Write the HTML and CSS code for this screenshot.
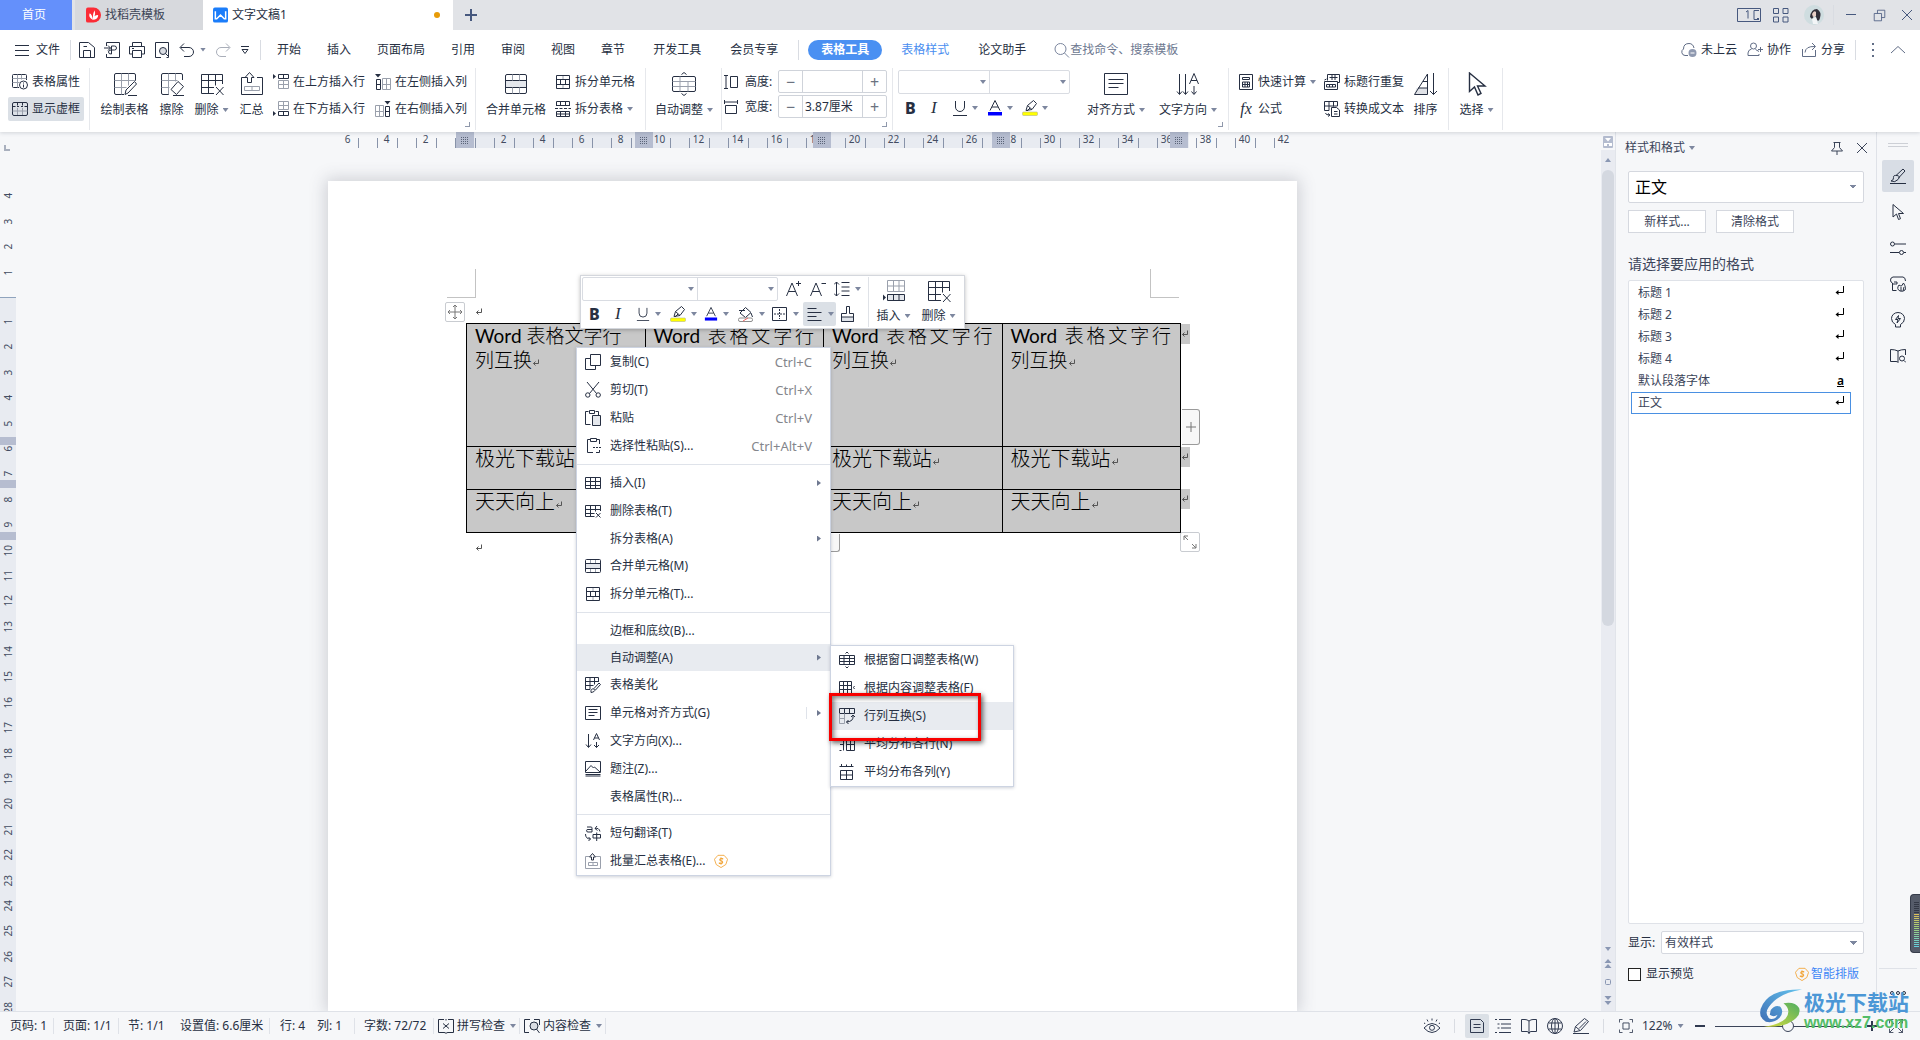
FILE: index.html
```html
<!DOCTYPE html>
<html lang="zh-CN">
<head>
<meta charset="utf-8">
<title>文字文稿1</title>
<link rel="stylesheet" href="styles.css">
</head>
<body>
<svg class="defs" aria-hidden="true">
  <symbol id="grid" viewBox="0 0 16 16"><path d="M.5 2.500h15v11H.5zM.5 6.500h15M.5 10.500h15M5.500 2.500v11M10.500 2.500v11"/></symbol>
  <symbol id="tbl-x" viewBox="0 0 16 16"><path d="M15.500 8V2.500H.5v11h9M.5 6.500h15M.5 10.500h9M5.500 2.500v11M10.500 2.500v6M11 10l4.500 4.500M15.500 10 11 14.500"/></symbol>
  <symbol id="merge" viewBox="0 0 16 16"><path d="M.5 5.500h15v5H.5z" fill="#e4e7ec"/><path d="M1.500 1.500h13a1 1 0 0 1 1 1v11a1 1 0 0 1-1 1h-13a1 1 0 0 1-1-1v-11a1 1 0 0 1 1-1"/><path class="soft" d="M5.500 2v3M10.500 2v3M5.500 11v3M10.500 11v3"/></symbol>
  <symbol id="split" viewBox="0 0 16 16"><path d="M1.500 1.500h13v13h-13zM1.500 5.500h13M1.500 10.500h13M5.500 5.500v5M10.500 5.500v5"/><path class="soft" d="M8 2v3M8 11v3"/></symbol>
  <symbol id="split-t" viewBox="0 0 16 16"><path d="M1.500 4.500V.5h13v4M5.500.5v4M10.500.5v4M1 4.500h14M0 7.500h3M4.500 7.500h3M9 7.500h3M13.500 7.500H16M1.500 10.500h13v5h-13zM1.500 13h13M5.500 10.500v5M10.500 10.500v5"/></symbol>
  <symbol id="props" viewBox="0 0 16 16"><path d="M7 13.500H1.500a1 1 0 0 1-1-1v-11a1 1 0 0 1 1-1h12a1 1 0 0 1 1 1V6"/><path class="soft" d="M.5 4.500h14M.5 8.500h7M5.500.5v13M9.500.5v5"/><circle cx="11.500" cy="11" r="4"/><path d="M11.500 10.500v3M11.500 8.500v1"/></symbol>
  <symbol id="dashed" viewBox="0 0 16 16"><rect x=".5" y="1.500" width="15" height="13" rx="1.500"/><path d="M.5 5.500h3M5 5.500h2M9 5.500h2M12.500 5.500h3M5.500 1.500v3M10.500 1.500v3"/><path class="soft" d="M.5 10h15M5.500 7v7M10.500 7v7"/></symbol>
  <symbol id="ins-up" viewBox="0 0 16 16"><path d="M5.500.5h10v4h-10zM10.500.5v4" /><path class="soft" d="M5.500 6.500h10v8h-10zM5.500 10.500h10M10.500 6.500v8"/><path d="M0 0v5l3-2.500z" fill="currentColor" stroke="none"/></symbol>
  <symbol id="ins-down" viewBox="0 0 16 16"><path class="soft" d="M5.500.5h10v8h-10zM5.500 4.500h10M10.500.5v8"/><path d="M5.500 10.500h10v4h-10zM10.500 10.500v4"/><path d="M0 10v5l3-2.500z" fill="currentColor" stroke="none"/></symbol>
  <symbol id="ins-left" viewBox="0 0 16 16"><path d="M1.500 5.500h4v10h-4zM1.500 10.500h4"/><path class="soft" d="M7.500 4.500h8v11h-8zM7.500 10.500h8M11.500 4.500v11"/><path d="M0 0h6L3 3.500z" fill="currentColor" stroke="none"/></symbol>
  <symbol id="ins-right" viewBox="0 0 16 16"><path class="soft" d="M.5 4.500h8v11h-8zM.5 10.500h8M4.500 4.500v11"/><path d="M10.500 5.500h4v10h-4zM10.500 10.500h4"/><path d="M9.500 0h6l-3 3.500z" fill="currentColor" stroke="none"/></symbol>
  <symbol id="paras" viewBox="0 0 16 16"><path d="M.5 1.500h15v13H.5zM3.500 4.500h9M3.500 7.500h9M3.500 10.500h6"/></symbol>
  <symbol id="copy" viewBox="0 0 16 16"><path d="M5.500.5h10v11h-10zM5.500 4.500h-5v11h10v-4"/></symbol>
  <symbol id="cut" viewBox="0 0 16 16"><path d="M2 0l9.500 11.500M14 0 4.500 11.500"/><circle cx="2.800" cy="13" r="2.200"/><circle cx="13.200" cy="13" r="2.200"/></symbol>
  <symbol id="paste" viewBox="0 0 16 16"><path d="M5.500 14.500h-5v-13h3M10.500 1.500h3V5M4.500.5h5v3h-5z"/><path d="M7.500 5.500h8v10h-8z" fill="#e4e7ec"/></symbol>
  <symbol id="paste-s" viewBox="0 0 16 16"><path d="M8 14.500H2.500v-13h3M11.500 1.500h3V6M5.500.5h6v3h-6zM14.500 12v2.500H11M8 9.500h2M11 9.500h2M14 9.500h2"/></symbol>
  <symbol id="beauty" viewBox="0 0 16 16"><path d="M5 12.500H.5v-12h13V5M.5 4.500h13M.5 8.500h8M5 .5v12M9.500.5v7M6 15.500c-.5-3 1-4 3-3.500s1 3-3 3.500M9 11.500l5-5.500 1.500 1.500-5 5.500"/></symbol>
  <symbol id="dir" viewBox="0 0 16 16"><path d="M3.500 1v13M1 11.500l2.500 3 2.500-3M8.500 7l3-6.500 3 6.500M9.500 5h4M11.500 9v5.500M9 12l2.500 2.500L14 12"/></symbol>
  <symbol id="caption" viewBox="0 0 16 16"><path d="M.5.5h15v11H.5zM.5 15h15M1 10l5-5.500 2.500 2.500 1-1 5.500 5M.5 13.500h15"/></symbol>
  <symbol id="trans" viewBox="0 0 16 16"><path d="M2 2h4q1 0 1 1v4H3Q1.500 7 1.500 5.700T3 4.500h4M8 13h7.500v-3.500H8zM11.700 7.500v8.500M10 3.500q4-1 5 3M12 1l-2 2.500 2.500 2M.5 9q0 5 5 5M3.500 12l2 2-2 2"/></symbol>
  <symbol id="batch" viewBox="0 0 16 16"><path class="soft" d="M4 3.500H.5v12h15v-12H11M3.500 9.500h9v3h-9zM8 9.500v3"/><path d="M6.500 7V4h-2l3-3.500 3 3.500h-2v3z"/></symbol>
  <symbol id="fit-w" viewBox="0 0 16 16"><path d="M.5 3.500h15v9H.5zM.5 6.500h15M.5 9.500h15M5 3.500v9M10.500 3.500v9M6.500 1.500L8 0l1.500 1.500M6.500 14.500L8 16l1.500-1.500"/></symbol>
  <symbol id="fit-c" viewBox="0 0 16 16"><path d="M.5 1.500h12v12H.5zM.5 5.500h12M.5 9.500h12M4.500 1.500v12M8.500 1.500v12M15.500 6l-1 1.500 1 1.500"/></symbol>
  <symbol id="swap" viewBox="0 0 16 16"><path d="M.5 5.500v-5h15v5zM5.500.5v5M10.500.5v5"/><path class="soft" d="M.5 5.500v10h5v-10M.5 10.500h5"/><path d="M14 7.500q1 6-6.500 6.500M12 9l2-2 2 2M9.500 12l-2 2 2 2"/></symbol>
  <symbol id="rows" viewBox="0 0 16 16"><path d="M1 2.500h3.500v12M1 8.500h3M7.500 2.500h8v12h-8zM7.500 8.500h8M11.500 2.500v12M.5 14.500h2"/></symbol>
  <symbol id="cols" viewBox="0 0 16 16"><path d="M.5 2.500h14M2.500 0v2.500M7.500.5v2M12.500 0v2.500M1.500 6.500h12v9h-12zM1.500 11h12M7.500 6.500v9"/></symbol>
  <symbol id="coin" viewBox="0 0 16 16"><path d="M4.500 1.500h7l4 4.500-2 6L8 15.500 2.500 12l-2-6z"/><path d="M10.500 5.500H7.500Q6 6.500 7.500 7.500l1.500.7Q10.500 9.500 9 10.500H5.500M8 4v1.500M8 10.500V12" stroke-width="1.600"/></symbol>
  <symbol id="save" viewBox="0 0 16 16"><path d="M.5 15.500V.5h9l6 5v10zM4.500 15.500v-7h7v7M4.500 4.500H8"/></symbol>
  <symbol id="export" viewBox="0 0 16 16"><path d="M2.500 4V.5h13v15h-13V12M0 6h6.500M4 3.500 6.500 6 4 8.500M7.500 12V4h3q2 0 2 2t-2 2H7q-2.500 0-2.500 2T7 12h.5"/></symbol>
  <symbol id="print" viewBox="0 0 16 16"><path d="M3.500 4V.5h9V4M3.500 12h-3V4.500h15V12h-3M3.500 8.500h9v7h-9zM3 6.500h2"/></symbol>
  <symbol id="preview" viewBox="0 0 16 16"><path d="M7 15.500H1.500V.5h13v15h-2"/><circle cx="9" cy="9" r="3.500" fill="#dadde3"/><path d="M11.500 11.500 15 15"/></symbol>
  <symbol id="undo" viewBox="0 0 16 16"><path d="M1.500 5.500H10a4.500 4.500 0 0 1 0 9H5M5 1.500l-4 4 4 4"/></symbol>
  <symbol id="redo" viewBox="0 0 16 16"><path d="M14.500 5.500H6a4.500 4.500 0 0 0 0 9h5M11 1.500l4 4-4 4"/></symbol>
  <symbol id="search" viewBox="0 0 16 16"><circle cx="6.500" cy="7" r="5.500"/><path d="M10.500 11l4.500 4.500"/></symbol>
  <symbol id="cloud" viewBox="0 0 16 16"><path d="M7 13.500H4A3.500 3.500 0 0 1 2.500 7Q2.500 1.500 8 1.500q4 0 5 4.500"/><circle cx="11.500" cy="11" r="4" fill="#8f99b0" stroke="none"/><path d="M9.500 11h4" stroke="#fff"/></symbol>
  <symbol id="person" viewBox="0 0 16 16"><circle cx="6.500" cy="4" r="3"/><path d="M8.500 7.500l3.500 2M4.500 7Q1 8 1 11v2.500h11V12M13.500 5v5M11 7.500h5"/></symbol>
  <symbol id="share" viewBox="0 0 16 16"><path d="M1.500 7v7.500h13V8M4 10.500Q4.500 4 14 4.500M11 1l3.500 3.500L11 8"/></symbol>
  <symbol id="pin" viewBox="0 0 16 16"><path d="M4.500 2.500h7M5.500 2.500v5l-3 3.500h11l-3-3.500v-5M8 11v4"/></symbol>
  <symbol id="x" viewBox="0 0 16 16"><path d="M3 3l10 10M13 3 3 13"/></symbol>
  <symbol id="restore" viewBox="0 0 16 16"><path d="M1.500 5.500h9v9h-9zM5.500 5.500v-4h9v9h-4"/></symbol>
  <symbol id="apps" viewBox="0 0 16 16"><path d="M.5 1.500h5v5h-5zM10 1.500h5v5h-5zM.5 10h5v5h-5zM10 10h5v5h-5z"/></symbol>
  <symbol id="arrow" viewBox="0 0 16 16"><path d="M3 .5v12.500l3.500-3 2 5.500 2-.8-2-5.200h5z"/></symbol>
  <symbol id="brush" viewBox="0 0 16 16"><path d="M0 15.500h16M1 13q3-1 2.500-3.500T7 7.500t1 4-7 1.500M6 7.500l7-6.500 2 2-6.500 7"/></symbol>
  <symbol id="sliders" viewBox="0 0 16 16"><circle cx="2.500" cy="4" r="2"/><circle cx="11.500" cy="12.500" r="2"/><path d="M5 4h11M0 12.500h9M14 12.500h2"/></symbol>
  <symbol id="shop" viewBox="0 0 16 16"><path d="M6.500 14.500h-4V7Q.5 6.500.5 4T3 1h10q2.500.5 2.500 4M4 6h3v2H5.500M2.500 8h3"/><path d="M10 15q-4-2-1-6 1 1 2.500 1l2-3q3 5 1.500 7-2 2-5 1M11 15v-4M13 15l1-4"/></symbol>
  <symbol id="bulb" viewBox="0 0 16 16"><path d="M5.500 12.500V15h5v-2.500q4-2 4-6a6.500 6 0 0 0-13 0q0 4 4 6M8.500 3.500l-3 4h2.500l-1 3.500 3.500-4.500H8z"/></symbol>
  <symbol id="book-s" viewBox="0 0 16 16"><path d="M8 14.500V3Q5 1.500.5 1.500v12H6q2 0 2 1M8 3q3-1.500 7.500-1.500V7"/><circle cx="12" cy="10.500" r="2.500"/><path d="M14 12.500l2 2"/></symbol>
  <symbol id="calc" viewBox="0 0 16 16"><path d="M1.500.5h13v15h-13zM4.500 3.500h7v2h-7zM4.500 8h7v5h-7zM4.500 10.500h7M7 8v5M9.500 8v5"/></symbol>
  <symbol id="headrow" viewBox="0 0 16 16"><path d="M3.500 6.500v-6h12v8h-2M5.500 3.500h8M8 1v5M11 1v5M.5 7.500h13v8H.5zM2.500 10.500h9v2.500h-9zM5.500 10.500V13M8.500 10.500V13M.5 6l2-1"/></symbol>
  <symbol id="totext" viewBox="0 0 16 16"><path d="M5 9.500H.5v-9h13V5M.5 5h13M5 .5v9M9.500.5v5M7.500 6.500h5l3 2.500v6.500h-8zM10 10.500h3.500M10 13h3.500M1.500 12q0 2 4 2M4 12.500l2 1.500-2 1.500"/></symbol>
  <symbol id="hgt" viewBox="0 0 14 14"><path d="M0 .5h4M0 13.500h4M2 .5v13M6.500 1.500h7v11h-7z"/></symbol>
  <symbol id="wid" viewBox="0 0 14 14"><path d="M.5 0v4M13.500 0v4M.5 2h13M1.500 5.500h11v8h-11z"/></symbol>
  <symbol id="u" viewBox="0 0 16 16"><path d="M3.500 1v6a4.500 4.500 0 0 0 9 0V1M1 15.500h14"/></symbol>
  <symbol id="a-color" viewBox="0 0 16 16"><path d="M3 10.500 8 .5l5 10M5 7h6"/><path d="M1 12h14v3.500H1z" fill="#00f" stroke="none"/></symbol>
  <symbol id="hilite" viewBox="0 0 16 16"><path d="M4 10.500l1.500-5 6-5 3 3-4.500 6-6 1M5.500 5.500 10 9.500M5 11l3-3"/><rect x=".5" y="12" width="15" height="3.500" rx="1" fill="#ff0" stroke="#b5b58a" stroke-width=".6"/></symbol>
  <symbol id="bucket" viewBox="0 0 16 16"><path d="M7.500 1.500 2 7l5.500 4.500 5.500-5zM1 4.500h6M13 7l1.500 4"/><rect x=".5" y="12" width="14" height="3.500" rx="1.500" fill="#fff" stroke="#8d8d8d"/><path d="M5 15l5-3" stroke="#e66"/></symbol>
  <symbol id="borders" viewBox="0 0 16 16"><path d="M.5 1.500h14v13H.5z"/><path d="M7.500 3v10M2 8h11" stroke-dasharray="2 1"/></symbol>
  <symbol id="al" viewBox="0 0 16 16"><path d="M.5 2.500h9M.5 6.500h14M.5 10.500h9M.5 14.500h14"/></symbol>
  <symbol id="fmt" viewBox="0 0 16 16"><path d="M6.500 7.500V.5h3v7h4v8h-12v-8z"/><path d="M1.500 11h12v4.500h-12z" fill="#e0e4ea"/></symbol>
  <symbol id="a-plus" viewBox="0 0 16 16"><path d="M.5 15 6 2l5.500 13M2.500 10.500h7M12.500 0v5M10 2.500h5"/></symbol>
  <symbol id="a-minus" viewBox="0 0 16 16"><path d="M.5 15 6 2l5.500 13M2.500 10.500h7M11.500 2.500h5"/></symbol>
  <symbol id="lead" viewBox="0 0 16 16"><path d="M2.500 1v14M0 3.500 2.500 1 5 3.500M0 12.500 2.500 15 5 12.500M7.500 1.500h8M7.500 6h8M7.500 10h8M7.500 14.500h8"/></symbol>
  <symbol id="eye" viewBox="0 0 16 16"><path d="M0 10q8-9 16 0-8 9-16 0M8 2.500V.5M4 3.500l-1-2M12 3.500l1-2M1 6 0 4.500M15 6l1-1.500"/><circle cx="8" cy="9.800" r="2.500"/></symbol>
  <symbol id="page-v" viewBox="0 0 16 16"><path d="M1.500 1.500h10l3 3v10h-13zM4.500 6.500h7M4.500 9.500h7"/></symbol>
  <symbol id="outline" viewBox="0 0 16 16"><path d="M4 1.500h12M6 6h10M6 10h10M4 14.500h12M0 1.500h2M2.500 6h2M2.500 10h2M0 14.500h2"/></symbol>
  <symbol id="book" viewBox="0 0 16 16"><path d="M8 15.500V3Q6 1.500 4 1.500H.5v12H6q1.500 0 2 2 .5-2 2-2h5.500v-12H12Q10 1.500 8 3"/></symbol>
  <symbol id="globe" viewBox="0 0 16 16"><circle cx="8" cy="8" r="7.500"/><ellipse cx="8" cy="8" rx="3.500" ry="7.500"/><path d="M1.500 5h13M1.500 11h13M8 .5v15"/></symbol>
  <symbol id="pen" viewBox="0 0 16 16"><path d="M0 15.500h16M1 14l1.500-5.500 9-8 4 3-8 9zM2.500 8.500l4.500 4M6 10.500l7-7"/></symbol>
  <symbol id="fit" viewBox="0 0 16 16"><path d="M.5 4V.5H4M12 .5h3.500V4M15.500 12v3.500H12M4 15.500H.5V12M4.500 4.500h7v7h-7z"/></symbol>
  <symbol id="full" viewBox="0 0 16 16"><path d="M.5 5V.5H5M.5.5l5 5M11 .5h4.500V5M15.500.5l-5 5M15.500 11v4.500H11M15.500 15.500l-5-5M5 15.500H.5V11M.5 15.500l5-5"/></symbol>
  <symbol id="spell" viewBox="0 0 16 16"><path d="M6 1.500H.5v13H6q2 0 2 1 0-1 2-1h5.500v-13H10M5 5.500l6 5M11 5.500l-6 5M8 1v1.500"/></symbol>
  <symbol id="check" viewBox="0 0 16 16"><path d="M6 1.500H.5v13H5M10 1.500h5.500V7"/><circle cx="10" cy="8" r="4" fill="#dadde3"/><path d="M12.500 11l3 4"/></symbol>
  <symbol id="draw24" viewBox="0 0 24 24"><path d="M11 22.500H3a1.500 1.500 0 0 1-1.500-1.500V3A1.500 1.500 0 0 1 3 1.500h18A1.500 1.500 0 0 1 22.500 3v6"/><path class="soft" d="M1.500 8.500h21M1.500 15.500h12M8.500 1.500v21M15.500 1.500v12"/><path d="M12 22.500l1-4.500 8.500-8.500 2 2.500-8.500 9zM15 23.500h9"/></symbol>
  <symbol id="erase24" viewBox="0 0 24 24"><path d="M9 22.500H3A1.500 1.500 0 0 1 1.500 21V3A1.500 1.500 0 0 1 3 1.500h18A1.500 1.500 0 0 1 22.500 3v5"/><path class="soft" d="M1.500 8.500h16M1.500 15.500h8M8.500 1.500v21M15.500 1.500v8"/><path d="M11 17.500l7-8 5.500 5-7 8zM13 23.500h11" fill="#fff"/></symbol>
  <symbol id="del24" viewBox="0 0 24 24"><path d="M22.500 12V2.500h-21v19H14M1.500 8.500h21M1.500 15.500H14M8.500 2.500v19M15.500 2.500v11M16 15l7.500 8M23.500 15 16 23"/></symbol>
  <symbol id="sum24" viewBox="0 0 24 24"><path d="M6 5.500H1.500v17h21v-17H17"/><path class="soft" d="M4.500 14.500h15v4h-15zM12 14.500v4"/><path d="M7.500 10.500V5.500H5L9.500.5 14 5.500h-2.500v5z"/></symbol>
  <symbol id="merge24" viewBox="0 0 24 24"><path d="M1.500 8.500h21v7h-21z" fill="#e4e7ec"/><path d="M3 2.500h18q1.500 0 1.500 1.500v16q0 1.500-1.500 1.500H3q-1.500 0-1.500-1.500V4Q1.500 2.500 3 2.500M1.500 8.500h21v7h-21z"/><path class="soft" d="M8.500 2.500v6M15.500 2.500v6M8.500 15.500v6M15.500 15.500v6"/></symbol>
  <symbol id="auto24" viewBox="0 0 24 24"><rect x=".5" y="4.500" width="23" height="15" rx="1.500"/><path class="soft" d="M.5 9.500h23M.5 14.500h23M8 4.500v15M16 9.500v10"/><path d="M9.500 2.500 12 .5l2.500 2M9.500 21.500l2.500 2 2.500-2"/></symbol>
  <symbol id="align24" viewBox="0 0 24 24"><path d="M.5 1.500h23v21H.5zM4.500 7.500h15M4.500 11.500h15M4.500 15.500h10"/></symbol>
  <symbol id="dir24" viewBox="0 0 24 24"><path d="M3.500 2v20M1 19.500l2.500 3 2.500-3M9.500 2v20M7 19.500l2.500 3 2.500-3M13.500 12 18 1.500 22.500 12M15 8.500h6M18 14v8M15.500 19.500l2.500 3 2.500-3"/></symbol>
  <symbol id="sort24" viewBox="0 0 24 24"><path d="M2.500 16h11v6.500H.5z" fill="#e0e2e7" stroke="none"/><path d="M13.500 2v20.500H.5zM9 9.500h4.500M4 16h9.500M19.500 1v21.500M16 19l3.500 3.500L23 19"/></symbol>
  <symbol id="sel24" viewBox="0 0 24 24"><path d="M4.500 1v18.500l5-4.500 3.500 8 3-1.500-3.500-7.500h7.500z" stroke-width="1.400"/></symbol>
  <symbol id="ins24" viewBox="0 0 24 24"><path class="soft" d="M5.500 1.500h17v11h-17zM5.500 7h17M11.500 1.500v11M17 1.500v11"/><path d="M5.500 15.500h17v6h-17zM11.500 15.500v6M17 15.500v6" fill="#e4e7ec"/><path d="M1 15.500v6l3-3z" fill="currentColor" stroke="none"/></symbol>
  <symbol id="ret" viewBox="0 0 8 8"><path d="M6.500.5v4h-5M3.500 2.500l-2 2 2 2"/></symbol>
  <symbol id="enter" viewBox="0 0 10 10"><path d="M8.500 0v6.500H2" /><path d="M3.500 4v5L.500 6.500z" fill="currentColor" stroke="none"/></symbol>
</svg>

<header>
  <div class="tabbar">
    <button class="tab home">首页</button>
    <button class="tab docer"><svg class="logo" viewBox="0 0 16 16"><path d="M2 0h6a8 8 0 0 1 0 16H2a2 2 0 0 1-2-2V2a2 2 0 0 1 2-2" fill="#fb2c36"/><path d="M7 13q-5-3-3-7 3 2 3 7 0-6 2-10 2 5-2 10 1-5 6-5 0 5-6 5" fill="#fff"/></svg>找稻壳模板</button>
    <button class="tab active"><svg class="logo" viewBox="0 0 16 16"><rect width="16" height="16" rx="2" fill="#1b7dfa"/><path d="M2.500 4v8h1.500l4-4 4 4h1.500V4" fill="none" stroke="#fff" stroke-width="1.600"/></svg>文字文稿1<i class="dirty"></i></button>
    <button class="newtab" aria-label="新建"><svg class="i16" viewBox="0 0 16 16"><path d="M8 2v12M2 8h12" stroke-width="2"/></svg></button>
    <div class="winctl">
      <svg class="wide" viewBox="0 0 24 14"><path d="M.5.5h23v13H.5zM22 2.500h-5v9h5M9 4l2-1.500v8M20 10.500h2"/></svg>
      <svg class="i16"><use href="#apps"/></svg>
      <svg class="avatar" viewBox="0 0 20 20"><circle cx="10" cy="10" r="10" fill="#cfdde0"/><path d="M6 12q1-8 7-8 5 3 3 9-1 4-3 2l-2-5-3 4z" fill="#33303a"/><path d="M8 9q2-4 4-2v4l-3 1z" fill="#e9cfc6"/><path d="M8 14l4-2 2 7H9z" fill="#f3f5f7"/></svg>
      <i class="vline"></i>
      <button aria-label="最小化"><svg class="i16" viewBox="0 0 16 16"><path d="M3 7.500h10"/></svg></button>
      <button aria-label="还原"><svg class="i13"><use href="#restore"/></svg></button>
      <button aria-label="关闭"><svg class="i16"><use href="#x"/></svg></button>
    </div>
  </div>

  <nav class="menubar">
    <button class="file"><svg class="i16" viewBox="0 0 16 16"><path d="M1 3.500h14M1 8.500h14M1 13.500h14"/></svg>文件</button>
    <i class="vline"></i>
    <div class="quick">
      <button aria-label="保存"><svg class="i16"><use href="#save"/></svg></button>
      <button aria-label="输出"><svg class="i16"><use href="#export"/></svg></button>
      <button aria-label="打印"><svg class="i16"><use href="#print"/></svg></button>
      <button aria-label="预览"><svg class="i16"><use href="#preview"/></svg></button>
      <button aria-label="撤销" class="undo"><svg class="i16"><use href="#undo"/></svg><i class="caret"></i></button>
      <button aria-label="恢复" class="redo"><svg class="i16"><use href="#redo"/></svg></button>
      <button aria-label="更多"><svg class="i10" viewBox="0 0 10 10"><path d="M1 1.500h8M2 4.500h6L5 8.500z"/></svg></button>
    </div>
    <i class="vline"></i>
    <div class="menus">
      <button>开始</button><button>插入</button><button>页面布局</button><button>引用</button><button>审阅</button><button>视图</button><button>章节</button><button class="roomy">开发工具</button><button class="roomy">会员专享</button>
    </div>
    <i class="vline"></i>
    <button class="pill">表格工具</button>
    <button class="ctx">表格样式</button>
    <button class="helper">论文助手</button>
    <label class="find"><svg class="i16"><use href="#search"/></svg><input type="text" placeholder="查找命令、搜索模板"></label>
    <div class="share">
      <button><svg class="i16"><use href="#cloud"/></svg>未上云</button>
      <button><svg class="i16"><use href="#person"/></svg>协作</button>
      <button><svg class="i16"><use href="#share"/></svg>分享</button>
      <i class="vline"></i>
      <svg class="i16" viewBox="0 0 16 16"><path d="M7 2h2M7 8h2M7 14h2" stroke-width="2"/></svg>
      <svg class="i16" viewBox="0 0 16 16"><path d="M1 11l7-6.500 7 6.500"/></svg>
    </div>
  </nav>

  <div class="ribbon">
    <div class="group g-props">
      <div class="pair">
        <button class="small"><svg class="i16"><use href="#props"/></svg>表格属性</button>
        <button class="small on"><svg class="i16"><use href="#dashed"/></svg>显示虚框</button>
      </div>
    </div>
    <div class="group g-draw">
      <button class="big w59"><svg class="i24"><use href="#draw24"/></svg><span>绘制表格</span></button>
      <button class="big w35"><svg class="i24"><use href="#erase24"/></svg><span>擦除</span></button>
      <button class="big w45"><svg class="i24"><use href="#del24"/></svg><span>删除<i class="caret"></i></span></button>
      <button class="big w35"><svg class="i24"><use href="#sum24"/></svg><span>汇总</span></button>
      <div class="pair">
        <button class="small"><svg class="i16"><use href="#ins-up"/></svg>在上方插入行</button>
        <button class="small"><svg class="i16"><use href="#ins-down"/></svg>在下方插入行</button>
      </div>
      <div class="pair">
        <button class="small"><svg class="i16"><use href="#ins-left"/></svg>在左侧插入列</button>
        <button class="small"><svg class="i16"><use href="#ins-right"/></svg>在右侧插入列</button>
      </div>
      <i class="launch"></i>
    </div>
    <div class="group g-merge">
      <button class="big w70"><svg class="i24"><use href="#merge24"/></svg><span>合并单元格</span></button>
      <div class="pair">
        <button class="small"><svg class="i16"><use href="#split"/></svg>拆分单元格</button>
        <button class="small"><svg class="i16"><use href="#split-t"/></svg>拆分表格<i class="caret"></i></button>
      </div>
    </div>
    <div class="group g-auto">
      <button class="big w70"><svg class="i24"><use href="#auto24"/></svg><span>自动调整<i class="caret"></i></span></button>
    </div>
    <div class="group g-size">
      <div class="pair">
        <div class="size"><svg class="i14"><use href="#hgt"/></svg><label for="rh">高度:</label><span class="step"><button>−</button><input id="rh" type="text" value=""><button>+</button></span></div>
        <div class="size"><svg class="i14"><use href="#wid"/></svg><label for="cw">宽度:</label><span class="step"><button>−</button><input id="cw" type="text" value="3.87厘米"><button>+</button></span></div>
      </div>
      <i class="launch"></i>
    </div>
    <div class="group g-font">
      <div class="fontbox">
        <div class="combos"><button aria-label="字体"><i class="caret"></i></button><button aria-label="字号"><i class="caret"></i></button></div>
        <div class="fmts">
          <button class="b">B</button><button class="it">I</button>
          <button><svg class="i16"><use href="#u"/></svg><i class="caret"></i></button>
          <button><svg class="i16"><use href="#a-color"/></svg><i class="caret"></i></button>
          <button><svg class="i16"><use href="#hilite"/></svg><i class="caret"></i></button>
        </div>
      </div>
      <button class="big w72"><svg class="i24"><use href="#align24"/></svg><span>对齐方式<i class="caret"></i></span></button>
      <button class="big w72"><svg class="i24"><use href="#dir24"/></svg><span>文字方向<i class="caret"></i></span></button>
      <i class="launch"></i>
    </div>
    <div class="group g-calc">
      <div class="pair">
        <button class="small"><svg class="i16"><use href="#calc"/></svg>快速计算<i class="caret"></i></button>
        <button class="small"><em class="fx">fx</em>公式</button>
      </div>
      <div class="pair">
        <button class="small"><svg class="i16"><use href="#headrow"/></svg>标题行重复</button>
        <button class="small"><svg class="i16"><use href="#totext"/></svg>转换成文本</button>
      </div>
      <button class="big w35"><svg class="i24"><use href="#sort24"/></svg><span>排序</span></button>
    </div>
    <div class="group g-sel">
      <button class="big w45"><svg class="i24"><use href="#sel24"/></svg><span>选择<i class="caret"></i></span></button>
    </div>
  </div>
</header>

<main>
  <aside class="vruler">
    <i class="corner"></i>
    <ol class="above"><li>4</li><li>3</li><li>2</li><li>1</li></ol>
    <div class="below">
      <ol><li>1</li><li>2</li><li>3</li><li>4</li><li>5</li><li>6</li><li>7</li><li>8</li><li>9</li><li>10</li><li>11</li><li>12</li><li>13</li><li>14</li><li>15</li><li>16</li><li>17</li><li>18</li><li>19</li><li>20</li><li>21</li><li>22</li><li>23</li><li>24</li><li>25</li><li>26</li><li>27</li><li>28</li></ol>
      <i class="vmark m1"></i><i class="vmark m2"></i><i class="vmark m3"></i>
    </div>
  </aside>

  <section class="canvas">
    <div class="sheet">
      <div class="hruler">
        <i class="band"></i>
        <ol><li class="first">6</li><li>4</li><li>2</li><li></li><li>2</li><li>4</li><li>6</li><li>8</li><li>10</li><li>12</li><li>14</li><li>16</li><li>18</li><li>20</li><li>22</li><li>24</li><li>26</li><li>28</li><li>30</li><li>32</li><li>34</li><li>36</li><li>38</li><li>40</li><li class="last">42</li></ol>
        <i class="hmark h1"></i><i class="hmark h2"></i><i class="hmark h3"></i><i class="hmark h4"></i><i class="hmark h5"></i>
      </div>
      <article class="page">
        <i class="crop left"></i><i class="crop right"></i>
        <p class="lead"><svg class="ret"><use href="#ret"/></svg></p>
        <table>
          <tr class="tall">
            <td><span>Word <b>表格文字行</b></span><span><b>列互换</b><svg class="ret"><use href="#ret"/></svg></span></td>
            <td><span class="just">Word <b>表格文字行</b></span><span><b>列互换</b><svg class="ret"><use href="#ret"/></svg></span></td>
            <td><span class="just">Word <b>表格文字行</b></span><span><b>列互换</b><svg class="ret"><use href="#ret"/></svg></span></td>
            <td><span class="just">Word <b>表格文字行</b></span><span><b>列互换</b><svg class="ret"><use href="#ret"/></svg></span></td>
          </tr>
          <tr>
            <td>极光下载站<svg class="ret"><use href="#ret"/></svg></td><td>极光下载站<svg class="ret"><use href="#ret"/></svg></td><td>极光下载站<svg class="ret"><use href="#ret"/></svg></td><td>极光下载站<svg class="ret"><use href="#ret"/></svg></td>
          </tr>
          <tr>
            <td>天天向上<svg class="ret"><use href="#ret"/></svg></td><td>天天向上<svg class="ret"><use href="#ret"/></svg></td><td>天天向上<svg class="ret"><use href="#ret"/></svg></td><td>天天向上<svg class="ret"><use href="#ret"/></svg></td>
          </tr>
        </table>
        <p class="tail"><svg class="ret"><use href="#ret"/></svg></p>

        <i class="eor r1"><svg class="ret"><use href="#ret"/></svg></i>
        <i class="eor r2"><svg class="ret"><use href="#ret"/></svg></i>
        <i class="eor r3"><svg class="ret"><use href="#ret"/></svg></i>
        <button class="handle move" aria-label="移动表格"><svg class="i16" viewBox="0 0 16 16"><path d="M8 1v14M1 8h14M6 3l2-2 2 2M6 13l2 2 2-2M3 6 1 8l2 2M13 6l2 2-2 2"/></svg></button>
        <button class="handle addcol" aria-label="插入列"><svg class="i10" viewBox="0 0 10 10"><path d="M5 0v10M0 5h10"/></svg></button>
        <button class="handle addrow" aria-label="插入行"></button>
        <button class="handle resize" aria-label="缩放表格"><svg class="i16" viewBox="0 0 16 16"><path d="M2 6V2h4M2 2l4 4M14 10v4h-4M14 14l-4-4"/></svg></button>

        <div class="mini">
          <div class="mini-l">
            <div class="mini-row">
              <div class="combos"><button aria-label="字体"><i class="caret"></i></button><button aria-label="字号"><i class="caret"></i></button></div>
              <button aria-label="增大字号"><svg class="i16"><use href="#a-plus"/></svg></button>
              <button aria-label="减小字号"><svg class="i16"><use href="#a-minus"/></svg></button>
              <button aria-label="行距"><svg class="i16"><use href="#lead"/></svg><i class="caret"></i></button>
            </div>
            <div class="mini-row fmts">
              <button class="b">B</button><button class="it">I</button>
              <button><svg class="i14"><use href="#u"/></svg><i class="caret"></i></button>
              <button><svg class="i16"><use href="#hilite"/></svg><i class="caret"></i></button>
              <button><svg class="i14"><use href="#a-color"/></svg><i class="caret"></i></button>
              <button><svg class="i16"><use href="#bucket"/></svg><i class="caret"></i></button>
              <button><svg class="i16"><use href="#borders"/></svg><i class="caret"></i></button>
              <button class="on"><svg class="i16"><use href="#al"/></svg><i class="caret"></i></button>
              <button class="solo"><svg class="i16"><use href="#fmt"/></svg></button>
            </div>
          </div>
          <div class="mini-r">
            <button class="big w45"><svg class="i24"><use href="#ins24"/></svg><span>插入<i class="caret"></i></span></button>
            <button class="big w45"><svg class="i24"><use href="#del24"/></svg><span>删除<i class="caret"></i></span></button>
          </div>
        </div>

        <div class="menu main-menu">
          <button><svg class="i16"><use href="#copy"/></svg>复制(C)<kbd>Ctrl+C</kbd></button>
          <button><svg class="i16"><use href="#cut"/></svg>剪切(T)<kbd>Ctrl+X</kbd></button>
          <button><svg class="i16"><use href="#paste"/></svg>粘贴<kbd>Ctrl+V</kbd></button>
          <button><svg class="i16"><use href="#paste-s"/></svg>选择性粘贴(S)...<kbd>Ctrl+Alt+V</kbd></button>
          <hr>
          <button><svg class="i16"><use href="#grid"/></svg>插入(I)<i class="sub"></i></button>
          <button><svg class="i16"><use href="#tbl-x"/></svg>删除表格(T)</button>
          <button class="plain">拆分表格(A)<i class="sub"></i></button>
          <button><svg class="i16"><use href="#merge"/></svg>合并单元格(M)</button>
          <button><svg class="i16"><use href="#split"/></svg>拆分单元格(T)...</button>
          <hr>
          <button class="plain">边框和底纹(B)...</button>
          <button class="plain hot">自动调整(A)<i class="sub"></i></button>
          <button><svg class="i16"><use href="#beauty"/></svg>表格美化</button>
          <button><svg class="i16"><use href="#paras"/></svg>单元格对齐方式(G)<i class="part"></i><i class="sub"></i></button>
          <button><svg class="i16"><use href="#dir"/></svg>文字方向(X)...</button>
          <button><svg class="i16"><use href="#caption"/></svg>题注(Z)...</button>
          <button class="plain">表格属性(R)...</button>
          <hr>
          <button><svg class="i16"><use href="#trans"/></svg>短句翻译(T)</button>
          <button><svg class="i16"><use href="#batch"/></svg>批量汇总表格(E)...<svg class="i14 gold"><use href="#coin"/></svg></button>
        </div>

        <div class="menu sub-menu">
          <button><svg class="i16"><use href="#fit-w"/></svg>根据窗口调整表格(W)</button>
          <button><svg class="i16"><use href="#fit-c"/></svg>根据内容调整表格(F)</button>
          <button class="hot"><svg class="i16"><use href="#swap"/></svg>行列互换(S)</button>
          <button><svg class="i16"><use href="#rows"/></svg>平均分布各行(N)</button>
          <button><svg class="i16"><use href="#cols"/></svg>平均分布各列(Y)</button>
        </div>
        <i class="callout"></i>
      </article>
    </div>
  </section>

  <div class="scroll">
    <svg class="tabkind" viewBox="0 0 10 12"><rect width="10" height="12" rx="1" fill="#b4bccf" stroke="none"/><path d="M2 2h6L5 5.500zM1 7h8v3H6V8H4v2H1z" fill="#fff" stroke="none"/></svg>
    <div class="track">
      <i class="tri up"></i>
      <i class="thumb"></i>
      <i class="tri down"></i>
      <svg class="i10" viewBox="0 0 10 10"><path d="M5 0l3.500 4h-7zM5 5l3.500 4h-7z" fill="#8a97b3" stroke="none"/></svg>
      <svg class="i10" viewBox="0 0 10 10"><rect x="2.500" y="2.500" width="5" height="5" rx="1"/></svg>
      <svg class="i10" viewBox="0 0 10 10"><path d="M5 5 1.500 1h7zM5 10 1.500 6h7z" fill="#8a97b3" stroke="none"/></svg>
    </div>
  </div>

  <aside class="styles">
    <div class="phead"><span>样式和格式<i class="caret"></i></span><svg class="i16"><use href="#pin"/></svg><button aria-label="关闭"><svg class="i16"><use href="#x"/></svg></button></div>
    <select class="cur" aria-label="当前样式"><option>正文</option></select>
    <div class="btns"><button>新样式...</button><button>清除格式</button></div>
    <h2>请选择要应用的格式</h2>
    <ul class="list">
      <li>标题 1<svg class="i10"><use href="#enter"/></svg></li>
      <li>标题 2<svg class="i10"><use href="#enter"/></svg></li>
      <li>标题 3<svg class="i10"><use href="#enter"/></svg></li>
      <li>标题 4<svg class="i10"><use href="#enter"/></svg></li>
      <li>默认段落字体<u>a</u></li>
      <li class="picked">正文<svg class="i10"><use href="#enter"/></svg></li>
    </ul>
    <div class="show"><label for="show">显示:</label><select id="show"><option>有效样式</option></select></div>
    <div class="prev"><label><input type="checkbox">显示预览</label><a href="#smart"><svg class="i14 gold"><use href="#coin"/></svg>智能排版</a></div>
  </aside>

  <nav class="rail">
    <i class="grip"></i>
    <button class="on" aria-label="样式"><svg class="i16"><use href="#brush"/></svg></button>
    <button aria-label="选择"><svg class="i16"><use href="#arrow"/></svg></button>
    <button aria-label="属性"><svg class="i16"><use href="#sliders"/></svg></button>
    <button aria-label="稻壳"><svg class="i16"><use href="#shop"/></svg></button>
    <button aria-label="备份"><svg class="i16"><use href="#bulb"/></svg></button>
    <button aria-label="帮助"><svg class="i16"><use href="#book-s"/></svg></button>
    <div class="railend"><svg class="i16" viewBox="0 0 16 16"><circle cx="2" cy="8" r="1.500"/><circle cx="8" cy="8" r="1.500"/><circle cx="14" cy="8" r="1.500"/></svg></div>
  </nav>
</main>

<footer>
  <div class="stats">
    <span class="s1">页码: 1</span><span class="s2">页面: 1/1</span><span class="s3">节: 1/1</span><span class="s4">设置值: 6.6厘米</span><span class="s5">行: 4</span><span class="s6">列: 1</span><span class="s7">字数: 72/72</span>
    <button><svg class="i16"><use href="#spell"/></svg>拼写检查<i class="caret"></i></button>
    <button><svg class="i16"><use href="#check"/></svg>内容检查<i class="caret"></i></button>
  </div>
  <div class="views">
    <button aria-label="护眼"><svg class="i16"><use href="#eye"/></svg></button>
    <i class="vline"></i>
    <button class="on" aria-label="页面视图"><svg class="i16"><use href="#page-v"/></svg></button>
    <button aria-label="大纲"><svg class="i16"><use href="#outline"/></svg></button>
    <button aria-label="阅读"><svg class="i16"><use href="#book"/></svg></button>
    <button aria-label="Web"><svg class="i16"><use href="#globe"/></svg></button>
    <button aria-label="写作"><svg class="i16"><use href="#pen"/></svg></button>
    <i class="vline"></i>
    <button aria-label="适合"><svg class="i14"><use href="#fit"/></svg></button>
    <span class="pct">122%<i class="caret"></i></span>
    <button class="zo" aria-label="缩小"><svg class="i10" viewBox="0 0 10 10"><path d="M0 5h10" stroke-width="2"/></svg></button>
    <input type="range" aria-label="缩放" min="0" max="100" value="50">
    <button class="zi" aria-label="放大"><svg class="i10" viewBox="0 0 10 10"><path d="M0 5h10M5 0v10" stroke-width="2"/></svg></button>
    <button aria-label="全屏"><svg class="i14"><use href="#full"/></svg></button>
  </div>
</footer>

<i class="meter"></i>
<div class="mark">
  <svg class="swirl" viewBox="0 0 44 42"><defs><linearGradient id="sb" x1="0" y1="1" x2="1" y2="0"><stop offset="0" stop-color="#3f6fb5"/><stop offset="1" stop-color="#63c3ee"/></linearGradient><linearGradient id="sg" x1="0" y1="1" x2="1" y2="0"><stop offset="0" stop-color="#d8dc3c"/><stop offset="1" stop-color="#4fae62"/></linearGradient></defs><path d="M43 1Q12 0 3 16q-7 12 3 18 8 2 14-4 5-6 1-11-5-3-10 3l-1 5q4 3 8 0-2 5-8 4-6-5-1-12Q18 5 43 1" fill="url(#sb)"/><path d="M24 15q12-2 16 5 3 9-12 16-10 4-24 3 16-2 22-8 7-9-2-16" fill="url(#sg)"/></svg>
  <div><strong>极光下载站</strong><small>www.xz7.com</small></div>
</div>
</body>
</html>
```

FILE: styles.css
```css
* { box-sizing: border-box; }
html, body { height: 100%; margin: 0; }
body {
  display: flex; flex-direction: column; overflow: hidden; position: relative;
  background: #f6f7f9; color: #262f42;
  font: 12px/16px "Noto Sans", "Noto Sans CJK SC", sans-serif;
}
button, input, select { font: inherit; color: inherit; border: 0; background: none; padding: 0; margin: 0; border-radius: 0; outline: 0; }
button { display: flex; align-items: center; flex: none; white-space: nowrap; }
ol, ul, p, h2 { margin: 0; padding: 0; list-style: none; }
i { font-style: normal; }
svg { fill: none; stroke: currentColor; stroke-width: 1; flex: none; display: block; }
.defs { position: absolute; width: 0; height: 0; }
.soft { stroke: #9aa0ac; }
.i10 { width: 10px; height: 10px; }
.i13 { width: 13px; height: 13px; }
.i14 { width: 14px; height: 14px; }
.i16 { width: 16px; height: 16px; }
.i24 { width: 24px; height: 24px; }
.caret { flex: none; display: inline-block; width: 6px; height: 4px; background: #7d879f; clip-path: polygon(0 0, 100% 0, 50% 100%); }
.vline { flex: none; width: 1px; height: 20px; background: #d9dce2; }
.gold { color: #f2a63a; }

header { flex: none; position: relative; z-index: 2; background: #fff; box-shadow: 0 1px 4px rgba(60, 70, 90, .2); }
.tabbar { display: flex; height: 30px; background: #e1e3e7; }
.tab { height: 30px; }
.tab.home { width: 72px; padding-right: 4px; justify-content: center; background: #6490fb; color: #fff; }
.tab.docer { width: 128px; margin: 0 0 0 3px; padding-left: 11px; gap: 4px; background: #d7d9dd; color: #3c4456; }
.tab.active { width: 250px; padding: 0 13px 0 10px; gap: 4px; background: #fff; }
.logo { width: 15px; height: 16px; stroke: none; }
.dirty { width: 6px; height: 6px; margin-left: auto; border-radius: 3px; background: #e79b08; }
.newtab { margin-left: 10px; color: #46587e; }
.winctl { display: flex; align-items: center; gap: 12px; margin-left: auto; padding-right: 5px; color: #46587e; }
.wide { width: 24px; height: 14px; }
.avatar { width: 20px; height: 20px; stroke: none; margin: 0 -3px 0 3px; }
.winctl .vline { margin-right: -3px; }
.winctl button { width: 16px; justify-content: center; }

.menubar { display: flex; align-items: center; height: 38px; padding-top: 1px; }
.file { gap: 6px; margin: 0 10px 0 14px; }
.quick { display: flex; align-items: center; gap: 9px; width: 189px; padding-left: 8px; }
.undo { gap: 5px; }
.redo { color: #a9aeb9; }
.menus { display: flex; margin: 0 6px 0 3px; }
.menus button { padding: 0 13px; }
.menus .roomy { padding: 0 14px 0 15px; }
.pill { height: 20px; padding: 0 13px; margin-left: 9px; border-radius: 10px; background: #4a90f2; color: #fff; font-weight: 700; }
.ctx { margin-left: 19px; color: #4a8ef0; }
.helper { margin-left: 29px; }
.find { display: flex; align-items: center; margin-left: 28px; color: #7b869e; }
.find input { width: 130px; color: #6d7890; }
.find input::placeholder { color: #6d7890; opacity: 1; }
.share { display: flex; align-items: center; gap: 9px; margin-left: auto; padding-right: 14px; }
.share button { gap: 4px; margin-right: 1px; }
.share svg { color: #616d86; }

.ribbon { display: flex; height: 64px; }
.group { position: relative; display: flex; flex: none; height: 62px; border-right: 1px solid #e6e8ec; }
.pair { display: flex; flex: none; flex-direction: column; gap: 3px; padding-top: 2px; }
.small { height: 24px; gap: 4px; padding: 0 4px; }
.on { background: #dbe0e6; border-radius: 2px; }
.big { flex-direction: column; height: 50px; margin-top: 4px; gap: 6px; justify-content: flex-start; }
.big span { display: flex; align-items: center; gap: 4px; }
.w35 { width: 35px; } .w45 { width: 45px; } .w59 { width: 59px; } .w70 { width: 70px; } .w72 { width: 72px; }
.launch { position: absolute; right: 5px; bottom: 3px; width: 5px; height: 5px; border: solid #8f98ab; border-width: 0 1px 1px 0; }
.g-props { width: 90px; padding-left: 8px; }
.g-draw { width: 386px; padding-left: 5px; }
.g-draw .pair { width: 102px; }
.g-merge { width: 170px; padding-left: 5px; }
.g-auto { width: 76px; padding-left: 3px; }
.g-size { width: 171px; padding-left: 2px; }
.g-size .pair { gap: 2px; }
.size { display: flex; align-items: center; height: 23px; }
.size label { width: 33px; margin: 0 0 0 7px; white-space: nowrap; }
.step { display: flex; width: 109px; height: 23px; border: 1px solid #cfd3da; border-radius: 2px; }
.step button { width: 23px; justify-content: center; color: #6b7280; font-size: 16px; }
.step input { width: 61px; padding-left: 2px; border: solid #cfd3da; border-width: 0 1px; }
.g-font { width: 336px; padding-left: 5px; }
.fontbox { flex: none; width: 182px; }
.combos { display: flex; width: 172px; height: 24px; margin-top: 2px; border: 1px solid #d9dce2; border-radius: 2px; background: #fff; }
.combos button { flex: 1; justify-content: flex-end; padding-right: 3px; }
.combos button + button { flex: none; width: 80px; border-left: 1px solid #d9dce2; }
.fmts { display: flex; align-items: center; height: 28px; }
.fmts button { width: 35px; gap: 4px; height: 24px; }
.fmts .b { width: 25px; padding-left: 7px; font-size: 16px; font-weight: 800; }
.fmts .it { width: 29px; padding-left: 8px; font: italic 17px "Liberation Serif", serif; }
.g-calc { width: 220px; padding-left: 5px; }
.g-calc .pair:first-child { width: 86px; }
.g-sel { width: 54px; padding-left: 5px; }
.fx { width: 16px; font: italic 16px "Liberation Serif", serif; }

main { flex: 1; min-height: 0; display: flex; }
.vruler { flex: none; width: 16px; overflow: hidden; position: relative; color: #434c61; font-size: 10px; }
.corner { display: block; width: 6px; height: 6px; margin: 13px 0 0 4px; border: solid #a9b0be; border-width: 0 0 2px 2px; }
.vruler ol { display: grid; grid-auto-rows: 1fr; }
.vruler li { display: flex; align-items: center; justify-content: center; line-height: 16px; writing-mode: vertical-rl; transform: rotate(180deg); }
.above { height: 102px; margin-top: 32px; }
.below { position: relative; margin-top: 12px; padding-top: 11px; border-top: 1px solid #8fa3bd; background: #e8ebf1; }
.below ol { height: 711px; }
.vmark { position: absolute; left: 0; width: 16px; height: 8px; background: #b6bdd0; }
.m1 { top: 139px; } .m2 { top: 182px; } .m3 { top: 234px; }

.canvas { flex: 1; min-width: 0; overflow: hidden; padding-left: 8px; }
.sheet { width: 969px; height: 100%; margin: 0 auto; display: flex; flex-direction: column; }
.hruler { position: relative; height: 16px; margin-bottom: 33px; font-size: 10px; color: #434c61; }
.hruler ol { display: flex; position: relative; }
.hruler li { flex: none; width: 39px; height: 16px; line-height: 14px; text-align: center;
  background: linear-gradient(#8893a9, #8893a9) 30px 100% / 1px 10px no-repeat, linear-gradient(#8893a9, #8893a9) 10px 100% / 1px 10px no-repeat; }
.hruler .first { background-size: 1px 10px, 0 0; }
.hruler .last { background-size: 0 0, 1px 10px; }
.band { position: absolute; left: 130px; width: 731px; height: 16px; background: #e8ebf1; }
.hmark { position: absolute; top: 0; width: 18px; height: 16px;
  background: repeating-linear-gradient(#b6bdd0 0 1px, transparent 1px 2px), repeating-linear-gradient(90deg, #5a6478 0 1px, transparent 1px 2px) 5px 4px / 8px 8px no-repeat, #b6bdd0; }
.h1 { left: 128px; } .h2 { left: 307px; } .h3 { left: 485px; } .h4 { left: 664px; } .h5 { left: 842px; }

.page { position: relative; flex: 1; padding: 120px 116px 0 138px; background: #fff; box-shadow: 0 0 16px 2px rgba(60, 66, 80, .22); color: #000; }
.crop { position: absolute; top: 88px; width: 29px; height: 29px; border: solid #c3c3c3; }
.crop.left { left: 119px; border-width: 0 1px 1px 0; }
.crop.right { left: 822px; border-width: 0 0 1px 1px; }
.ret { display: inline-block; width: 8px; height: 8px; color: #555; }
.lead, .tail { display: flex; align-items: center; height: 22px; padding-left: 9px; }
.tail { height: 30px; }
table { width: 100%; table-layout: fixed; border-collapse: collapse; background: #c8c8c8; font: 300 20px/22px Lato, "Noto Sans CJK SC", sans-serif; }
td { height: 43px; padding: 0 9px 0 8px; border: 1px solid #000; vertical-align: top; white-space: nowrap; }
.tall td { height: 123px; }
td span { display: block; font-weight: 400; font-size: 19px; line-height: 24px; }
td b { font-weight: 300; }
td .just { text-align: justify; text-align-last: justify; white-space: normal; }
.eor { position: absolute; left: 853px; display: flex; align-items: center; width: 9px; height: 20px; background: #c8c8c8; }
.r1 { top: 143px; } .r2 { top: 266px; } .r3 { top: 308px; }
.handle { position: absolute; justify-content: center; background: #fff; border: 1px solid #c9ccd1; border-radius: 2px; color: #777; }
.move { left: 117px; top: 121px; width: 20px; height: 20px; }
.addcol { left: 854px; top: 228px; width: 18px; height: 36px; border-color: #9a9a9a; border-left: 0; background: #f7f7f7; border-radius: 0 3px 3px 0; }
.addrow { left: 476px; top: 353px; width: 36px; height: 18px; border-color: #9a9a9a; border-top: 0; background: #f7f7f7; border-radius: 0 0 3px 3px; }
.resize { left: 852px; top: 351px; width: 20px; height: 20px; }

.mini { position: absolute; left: 252px; top: 94px; display: flex; width: 385px; height: 54px; padding: 1px; background: #fff; border: 1px solid #d4d7dd; box-shadow: 0 1px 4px rgba(0, 0, 0, .25); color: #262f42; }
.mini-l { flex: none; width: 286px; }
.mini-row { display: flex; align-items: center; gap: 8px; }
.mini-row .combos { width: 196px; margin: 0; height: 24px; }
.mini-row > button { gap: 5px; }
.mini-row.fmts { height: 26px; gap: 0; }
.mini-row.fmts button { width: 34px; padding-left: 1px; }
.mini-row.fmts .b { width: 25px; padding-left: 7px; }
.mini-row.fmts .it { width: 28px; padding-left: 8px; }
.mini-row.fmts .on { width: 33px; padding-left: 4px; margin-left: -2px; gap: 5px; background: #dbe0e6; }
.mini-row.fmts .solo { width: 20px; padding-left: 4px; }
.mini-r { display: flex; padding-left: 2px; border-left: 1px solid #dfe2e7; }
.mini-r .big { margin-top: 2px; gap: 5px; height: 46px; }

.menu { position: absolute; background: #fff; border: 1px solid #cdd4e2; box-shadow: 0 1px 3px rgba(60, 70, 100, .25); color: #262f42; }
.menu button { width: 100%; height: 28px; padding: 0 9px 0 8px; }
.menu button > svg:first-child { margin-right: 9px; }
.menu .plain { height: 27px; padding-left: 33px; }
.menu .hot { background: #e8ebf0; }
.menu hr { height: 1px; margin: 4px 0; border: 0; background: #dfe3ea; }
.menu kbd { margin: 0 9px 0 auto; font: inherit; font-size: 13px; color: #84868c; }
.menu .gold { margin-left: 8px; }
.sub { margin-left: auto; width: 4px; height: 6px; background: #6e7890; clip-path: polygon(0 0, 100% 50%, 0 100%); }
.part { width: 1px; height: 12px; margin-left: auto; background: #dfe3ea; }
.part + .sub { margin-left: 10px; }
.main-menu { left: 248px; top: 166px; width: 255px; }
.sub-menu { left: 502px; top: 464px; width: 184px; }
.callout { position: absolute; left: 501px; top: 512px; width: 152px; height: 48px; border: 3px solid #f80000; box-shadow: 2px 2px 5px rgba(0, 0, 0, .6), inset 2px 2px 5px rgba(0, 0, 0, .5); }

.scroll { flex: none; display: flex; flex-direction: column; align-items: center; width: 15px; border-right: 1px solid #e1e4ea; padding-top: 4px; }
.tabkind { width: 10px; height: 12px; margin-bottom: 2px; }
.track { flex: 1; align-self: stretch; display: flex; flex-direction: column; align-items: center; gap: 8px; padding: 8px 0 6px; background: #e9ebf1; color: #8a97b3; }
.tri { width: 6px; height: 4px; background: #8a97b3; }
.up { clip-path: polygon(50% 0, 100% 100%, 0 100%); }
.down { margin-top: auto; clip-path: polygon(0 0, 100% 0, 50% 100%); }
.thumb { width: 12px; height: 456px; border-radius: 6px; background: #d4d8e0; }

.styles { flex: none; display: flex; flex-direction: column; width: 261px; padding: 6px 12px 0; border-right: 1px solid #dfe2e8; color: #3b4459; }
.phead { display: flex; align-items: center; gap: 9px; height: 20px; margin: 0 -6px 0 -3px; }
.phead span { display: flex; align-items: center; gap: 4px; margin-right: auto; }
.styles select { appearance: none; width: 100%; border: 1px solid #d5d8df; border-radius: 2px;
  background: linear-gradient(45deg, transparent 50%, #7d879f 50%) calc(100% - 10px) 50% / 4px 4px no-repeat, linear-gradient(-45deg, transparent 50%, #7d879f 50%) calc(100% - 6px) 50% / 4px 4px no-repeat, #fff; }
.styles .cur { flex: none; height: 32px; margin-top: 13px; padding-left: 6px; font-size: 16px; color: #000; }
.btns { display: flex; gap: 10px; margin-top: 7px; }
.btns button { width: 78px; height: 23px; justify-content: center; border: 1px solid #d5d8df; background: #fff; }
.styles h2 { margin: 21px 0 6px; font-size: 14px; font-weight: 400; line-height: 20px; }
.list { flex: 1; padding: 1px 12px 0 2px; border: 1px solid #dfe2e8; border-radius: 2px; background: #fff; }
.list li { display: flex; align-items: center; justify-content: space-between; height: 22px; padding: 0 5px 0 6px; border: 1px solid transparent; }
.list svg { margin-bottom: 5px; color: #000; }
.list u { color: #000; margin-right: 1px; font-weight: 600; }
.list .picked { border-color: #4a90e2; }
.show { display: flex; align-items: center; gap: 6px; margin-top: 7px; }
.show label { flex: none; width: 27px; white-space: nowrap; color: #262f42; }
.show select { height: 23px; padding-left: 3px; }
.prev { display: flex; align-items: center; justify-content: space-between; margin: 12px 5px 29px 0; color: #262f42; }
.prev label, .prev a { display: flex; align-items: center; gap: 2px; }
.prev label { gap: 5px; }
.prev a { color: #3f86f6; text-decoration: none; }
.prev input { appearance: none; width: 13px; height: 13px; border: 1px solid #222; background: #fff; }

.rail { flex: none; display: flex; flex-direction: column; align-items: center; gap: 4px; width: 43px; padding: 11px 2px 0 0; }
.grip { width: 20px; height: 4px; margin-bottom: 9px; border: solid #cdd0d6; border-width: 1px 0; }
.rail button { width: 32px; height: 32px; justify-content: center; }
.rail .on { background: #d8dde5; }
.railend { display: flex; justify-content: center; margin-top: auto; width: 38px; height: 43px; padding-top: 16px; border-top: 1px solid #dfe2e8; }

footer { flex: none; display: flex; justify-content: space-between; height: 29px; border-top: 1px solid #dfe2e8; background: #f6f7f9; }
.stats, .views { display: flex; align-items: center; }
.stats > * { height: 16px; border-right: 1px solid #dfe2e8; white-space: nowrap; }
.s1 { width: 54px; padding-left: 10px; } .s2 { width: 65px; padding-left: 9px; } .stats .s3 { width: 61px; padding-left: 9px; border: 0; } .s4 { width: 90px; } .stats .s5 { width: 47px; padding-left: 10px; border: 0; } .s6 { width: 38px; } .s7 { width: 79px; padding-left: 9px; }
.stats button { width: 86px; padding-left: 4px; gap: 3px; }
.stats .caret { margin-left: 2px; }
.views { gap: 2px; padding-right: 12px; color: #303a50; }
.views button { width: 24px; height: 24px; justify-content: center; }
.views .vline { height: 14px; margin: 0 8px; }
.pct { display: flex; align-items: center; gap: 5px; width: 48px; margin-left: 2px; }
.views .zo { width: 16px; }
.views .zi { width: 16px; margin-right: 2px; }
.views input { appearance: none; width: 145px; height: 12px; margin: 0 2px 0 5px; background: linear-gradient(#3b4459, #3b4459) 0 50% / 100% 1px no-repeat; }
.views input::-webkit-slider-thumb { appearance: none; width: 12px; height: 12px; border: 1px solid #3b4459; border-radius: 6px; background: #f6f7f9; }

.meter { position: absolute; z-index: 3; right: 0; top: 894px; width: 10px; height: 59px; border: 1px solid #363c4a; border-right: 0; border-radius: 4px 0 0 4px;
  background: repeating-linear-gradient(#555b69 0 1px, transparent 1px 2px) 3px 6px / 5px 46px no-repeat, linear-gradient(#333845 0 25%, #e4bd55 25%, #9ccf7c 60%, #62cfe0) 3px 6px / 5px 46px no-repeat, #555b69; }
.mark { position: absolute; z-index: 3; right: 11px; bottom: 8px; display: flex; gap: 1px; }
.swirl { width: 43px; height: 42px; stroke: none; }
.mark strong { display: block; font: 700 21px/26px "Noto Sans CJK SC", sans-serif; color: #4c97d6; }
.mark small { display: block; font: 700 16px/18px "Liberation Sans", sans-serif; color: #53bd68; }
```
